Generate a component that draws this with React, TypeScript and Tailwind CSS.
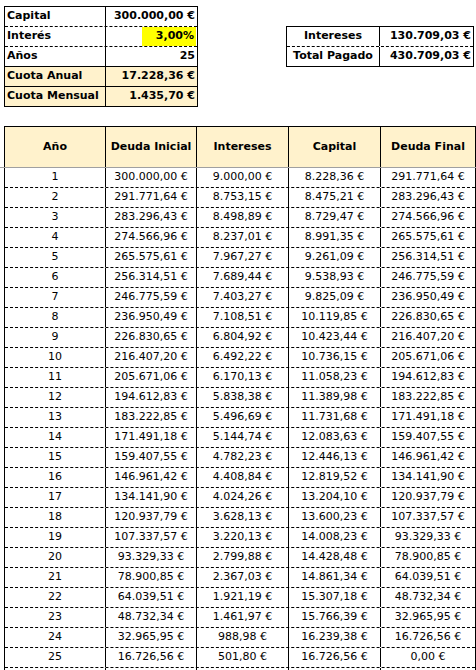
import React from "react";

const rows: string[][] = [
  ["1", "300.000,00 €", "9.000,00 €", "8.228,36 €", "291.771,64 €"],
  ["2", "291.771,64 €", "8.753,15 €", "8.475,21 €", "283.296,43 €"],
  ["3", "283.296,43 €", "8.498,89 €", "8.729,47 €", "274.566,96 €"],
  ["4", "274.566,96 €", "8.237,01 €", "8.991,35 €", "265.575,61 €"],
  ["5", "265.575,61 €", "7.967,27 €", "9.261,09 €", "256.314,51 €"],
  ["6", "256.314,51 €", "7.689,44 €", "9.538,93 €", "246.775,59 €"],
  ["7", "246.775,59 €", "7.403,27 €", "9.825,09 €", "236.950,49 €"],
  ["8", "236.950,49 €", "7.108,51 €", "10.119,85 €", "226.830,65 €"],
  ["9", "226.830,65 €", "6.804,92 €", "10.423,44 €", "216.407,20 €"],
  ["10", "216.407,20 €", "6.492,22 €", "10.736,15 €", "205.671,06 €"],
  ["11", "205.671,06 €", "6.170,13 €", "11.058,23 €", "194.612,83 €"],
  ["12", "194.612,83 €", "5.838,38 €", "11.389,98 €", "183.222,85 €"],
  ["13", "183.222,85 €", "5.496,69 €", "11.731,68 €", "171.491,18 €"],
  ["14", "171.491,18 €", "5.144,74 €", "12.083,63 €", "159.407,55 €"],
  ["15", "159.407,55 €", "4.782,23 €", "12.446,13 €", "146.961,42 €"],
  ["16", "146.961,42 €", "4.408,84 €", "12.819,52 €", "134.141,90 €"],
  ["17", "134.141,90 €", "4.024,26 €", "13.204,10 €", "120.937,79 €"],
  ["18", "120.937,79 €", "3.628,13 €", "13.600,23 €", "107.337,57 €"],
  ["19", "107.337,57 €", "3.220,13 €", "14.008,23 €", "93.329,33 €"],
  ["20", "93.329,33 €", "2.799,88 €", "14.428,48 €", "78.900,85 €"],
  ["21", "78.900,85 €", "2.367,03 €", "14.861,34 €", "64.039,51 €"],
  ["22", "64.039,51 €", "1.921,19 €", "15.307,18 €", "48.732,34 €"],
  ["23", "48.732,34 €", "1.461,97 €", "15.766,39 €", "32.965,95 €"],
  ["24", "32.965,95 €", "988,98 €", "16.239,38 €", "16.726,56 €"],
  ["25", "16.726,56 €", "501,80 €", "16.726,56 €", "0,00 €"],
  ["", "", "", "", ""],
];

const colW = ["w-[100px]", "w-[91px]", "w-[92px]", "w-[92px]", "w-[95px]"];
const headers = ["Año", "Deuda Inicial", "Intereses", "Capital", "Deuda Final"];

const App = () => {
  return (
    <div className="bg-white text-[11px] text-black pl-[4px] pt-[6px] h-[670px] overflow-hidden font-['DejaVu_Sans',Verdana,sans-serif]">
      <div className="flex items-start">
        {/* datos */}
        <div className="w-[194px] border border-black font-bold">
          <div className="flex h-[20px] border-b border-dashed border-black">
            <div className="w-[100px] flex items-center px-[2px]">Capital</div>
            <div className="flex-1 flex items-center justify-end px-[2px] border-l border-black">300.000,00 €</div>
          </div>
          <div className="flex h-[20px] border-b border-dashed border-black">
            <div className="w-[100px] flex items-center px-[2px]">Interés</div>
            <div className="flex-1 flex items-stretch justify-end pr-[1px] border-l border-black">
              <span className="flex items-center bg-[#ffff00] pl-[14px] pr-[2px]">3,00%</span>
            </div>
          </div>
          <div className="flex h-[20px] border-b border-black">
            <div className="w-[100px] flex items-center px-[2px]">Años</div>
            <div className="flex-1 flex items-center justify-end px-[2px] border-l border-black">25</div>
          </div>
          <div className="flex h-[20px] border-b border-black bg-[#fff2cc]">
            <div className="w-[100px] flex items-center px-[2px]">Cuota Anual</div>
            <div className="flex-1 flex items-center justify-end px-[2px] border-l border-black">17.228,36 €</div>
          </div>
          <div className="flex h-[19px] bg-[#fff2cc]">
            <div className="w-[100px] flex items-center px-[2px]">Cuota Mensual</div>
            <div className="flex-1 flex items-center justify-end px-[2px] border-l border-black">1.435,70 €</div>
          </div>
        </div>

        {/* totales */}
        <div className="ml-[88px] mt-[20px] w-[188px] border border-black font-bold">
          <div className="flex h-[20px] border-b border-dashed border-black">
            <div className="w-[92px] flex items-center justify-center">Intereses</div>
            <div className="flex-1 flex items-center justify-end px-[2px] border-l border-black">130.709,03 €</div>
          </div>
          <div className="flex h-[19px]">
            <div className="w-[92px] flex items-center justify-center">Total Pagado</div>
            <div className="flex-1 flex items-center justify-end px-[2px] border-l border-black">430.709,03 €</div>
          </div>
        </div>
      </div>

      {/* tabla de amortización */}
      <div className="mt-[19px]">
        <div className="flex h-[41px] border-t border-l border-r border-black bg-[#fff2cc] font-bold w-max">
          {headers.map((h, i) => (
            <div
              key={h}
              className={`${colW[i]} flex items-center justify-center ${i > 0 ? "border-l border-black" : ""}`}
            >
              {h}
            </div>
          ))}
        </div>
        <div className="h-px bg-[#a0a0a0] -ml-[4px] w-[476px]" />
        <div className="border-l border-r border-black w-max">
          {rows.map((r, ri) => (
            <div key={ri} className="flex h-[20px] border-b border-dashed border-black">
              {r.map((c, ci) => (
                <div
                  key={ci}
                  className={`${colW[ci]} flex items-center justify-center ${ci > 0 ? "border-l border-black" : ""}`}
                >
                  {c}
                </div>
              ))}
            </div>
          ))}
        </div>
      </div>
    </div>
  );
};

export default App;
